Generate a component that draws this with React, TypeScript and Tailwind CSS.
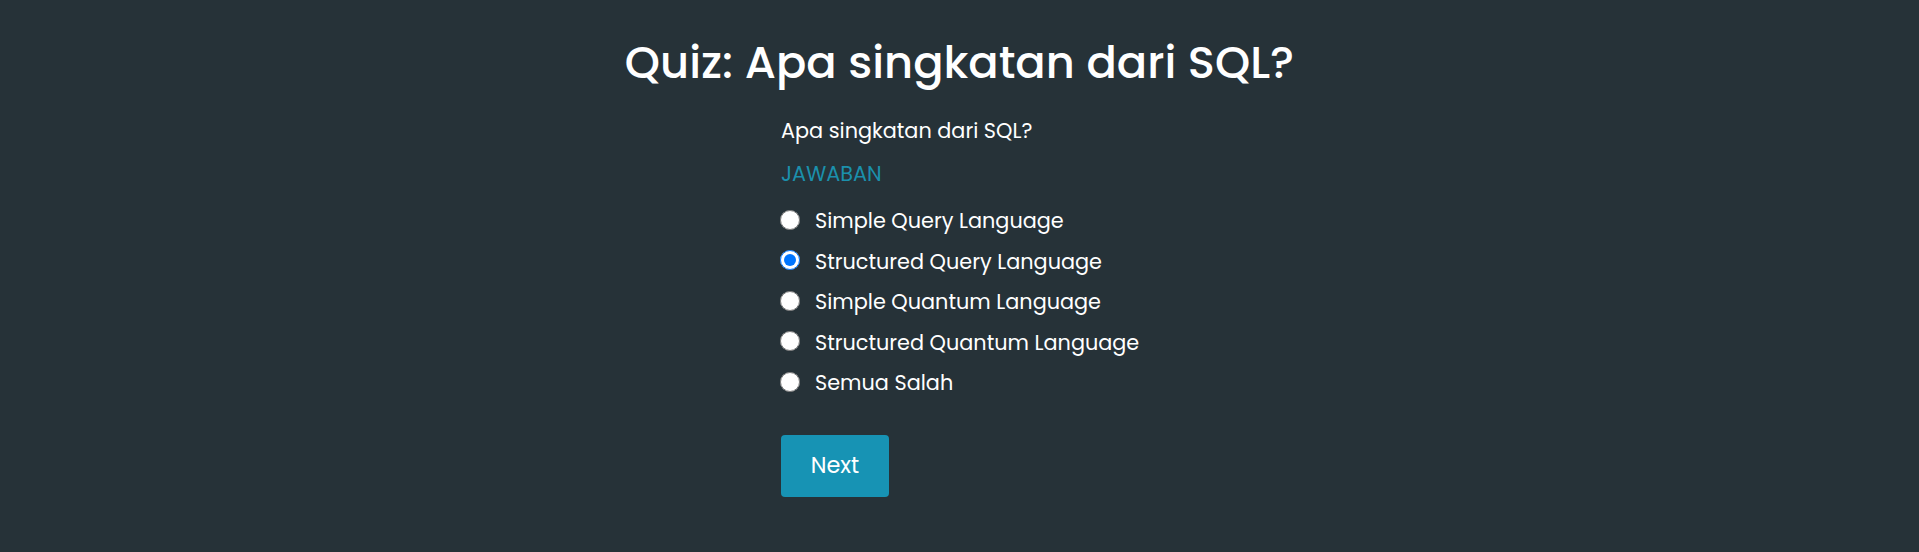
import React, { useState } from 'react';

const options = [
  'Simple Query Language',
  'Structured Query Language',
  'Simple Quantum Language',
  'Structured Quantum Language',
  'Semua Salah',
];

export default function App() {
  const [answer, setAnswer] = useState('Structured Query Language');

  return (
    <div className="min-h-screen w-full bg-[#263238] text-white font-['Poppins','Inter',sans-serif]">
      <h1 className="pt-[33px] text-center text-[44.8px] font-medium leading-[60px]">Quiz: Apa singkatan dari SQL?</h1>
      <div className="w-[357px] mx-auto mt-[22px]">
        <p className="text-[20.8px] leading-[31px] whitespace-nowrap">Apa singkatan dari SQL?</p>
        <p className="mt-[12px] text-[20.8px] leading-[31px] text-[#1b90ac]">JAWABAN</p>
        <div className="mt-[12px] flex flex-col">
          {options.map(o => (
            <label key={o} className="flex items-center h-[40.5px] cursor-pointer whitespace-nowrap">
              <input
                type="radio"
                name="answer"
                checked={answer === o}
                onChange={() => setAnswer(o)}
                className="w-5 h-5 m-0 -ml-px mb-[3px] shrink-0"
              />
              <span className="ml-[15px] text-[20.8px] leading-[30px]">{o}</span>
            </label>
          ))}
        </div>
        <button className="mt-[31px] w-[108px] h-[62px] rounded bg-[#1793b4] text-[22.4px] text-white">Next</button>
      </div>
    </div>
  );
}
